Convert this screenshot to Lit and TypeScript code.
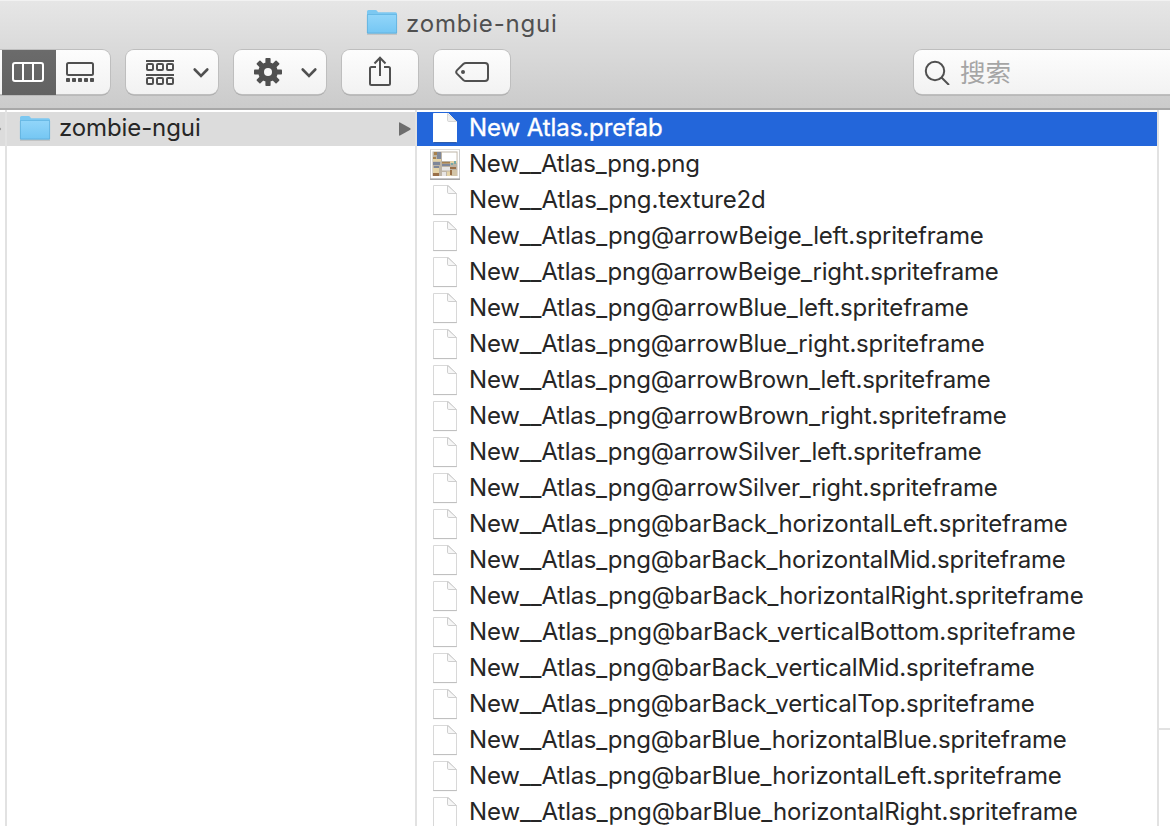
import { LitElement, html, css, svg } from "lit";
import { customElement } from "lit/decorators.js";

/** Each file name with the width its label takes in the column. */
const FILES: [string, number][] = [
  ["New Atlas.prefab", 192],
  ["New__Atlas_png.png", 229],
  ["New__Atlas_png.texture2d", 295],
  ["New__Atlas_png@arrowBeige_left.spriteframe", 513],
  ["New__Atlas_png@arrowBeige_right.spriteframe", 528],
  ["New__Atlas_png@arrowBlue_left.spriteframe", 498],
  ["New__Atlas_png@arrowBlue_right.spriteframe", 514],
  ["New__Atlas_png@arrowBrown_left.spriteframe", 520],
  ["New__Atlas_png@arrowBrown_right.spriteframe", 536],
  ["New__Atlas_png@arrowSilver_left.spriteframe", 511],
  ["New__Atlas_png@arrowSilver_right.spriteframe", 527],
  ["New__Atlas_png@barBack_horizontalLeft.spriteframe", 597],
  ["New__Atlas_png@barBack_horizontalMid.spriteframe", 595],
  ["New__Atlas_png@barBack_horizontalRight.spriteframe", 613],
  ["New__Atlas_png@barBack_verticalBottom.spriteframe", 605],
  ["New__Atlas_png@barBack_verticalMid.spriteframe", 564],
  ["New__Atlas_png@barBack_verticalTop.spriteframe", 564],
  ["New__Atlas_png@barBlue_horizontalBlue.spriteframe", 596],
  ["New__Atlas_png@barBlue_horizontalLeft.spriteframe", 591],
  ["New__Atlas_png@barBlue_horizontalRight.spriteframe", 607],
];

const measure = document.createElement("canvas").getContext("2d")!;
const spacing = (text: string, width: number) => {
  measure.font = '24px Inter, "Liberation Sans", sans-serif';
  return ((width + 1.6 - measure.measureText(text).width) / text.length).toFixed(3);
};

const folder = html`<svg class="folder" width="32" height="28" viewBox="0 0 32 28">
  <defs><linearGradient id="f" x1="0" y1="0" x2="0" y2="1"><stop offset="0" stop-color="#91d5f9"/><stop offset="1" stop-color="#74c6f3"/></linearGradient></defs>
  <path d="M1 26H31" stroke="#000" stroke-opacity=".22"/>
  <path d="M1 3.5Q1 2 2.5 2H9.5Q10.5 2 11.2 3L12 4.2H29.5Q31 4.2 31 5.7V25H1Z" fill="#7cc8f1"/>
  <path d="M1 7H31V24.5Q31 25.5 30 25.5H2Q1 25.5 1 24.5Z" fill="url(#f)"/>
  <path d="M1 6.5H31" stroke="#65b6e3" stroke-width=".8"/>
  <path d="M1.4 7V25H30.6V7" fill="none" stroke="#5faedb" stroke-width=".8"/>
</svg>`;

const doc = html`<svg class="doc" width="30" height="34" viewBox="0 0 30 34">
  <path class="page" d="M3.5 1.5H18.5L26.5 9.5V30.5H3.5Z"/>
  <path class="fold" d="M17.5 1.5V8.2Q17.5 9.5 18.8 9.5H26.5Z"/>
  <path class="foot" d="M3.2 30.6H26.8"/>
</svg>`;

const picture = html`<svg class="doc" width="30" height="34" viewBox="0 0 30 34">
  <rect x=".2" y=".9" width="29.6" height="30.7" rx=".8" fill="#c0c0c0"/>
  <path d="M0 31.2H30" stroke="#8c8c8c"/>
  <rect x="1" y="1.6" width="28" height="28.7" fill="#fff"/>
  <rect x="2.5" y="3.5" width="25" height="24.5" fill="#bdb4a5"/>
  <rect x="12" y="4.5" width="14.6" height="8.5" fill="#fff"/>
  <path d="M4 4H7V7H4ZM3 9H6V11H3ZM12 14H20V15.5H12Z" fill="#a8814e"/>
  <path d="M7 4H11V11H7ZM12 16H20V18H12ZM3 14H10V17H3ZM4 18H9V20H4Z" fill="#7f8799"/>
  <path d="M3 11H11V13.5H3ZM20 13H27V15H20ZM3 20H9V25H3ZM17 23.5H21V28H17Z" fill="#e5d4a8"/>
  <path d="M12 19H20V22.5H12ZM12 24H16V28H12Z" fill="#e8e6e4"/>
  <path d="M3 25H9V28H3ZM20 19H26V21H20ZM20 22H22V27H20Z" fill="#9a7048"/>
  <path d="M21 15H23V17H21ZM24 13H26V16H24Z" fill="#79aaa7"/>
  <path d="M22 22H27V28H22Z" fill="#d3c5a8"/>
</svg>`;

const chevron = html`<svg class="chev" width="18" height="12" viewBox="0 0 18 12"><path d="M2.7 2.5L9 8.8L15.3 2.5" fill="none" stroke="#505050" stroke-width="2.6" stroke-linecap="round" stroke-linejoin="miter"/></svg>`;

@customElement("app-root")
export class AppRoot extends LitElement {
  static styles = css`
    :host { display: flex; flex-direction: column; width: 1170px; height: 826px; overflow: hidden; background: #fff; color: #262626; font: 24px/34px Inter, "Liberation Sans", "Noto Sans CJK SC", sans-serif; }
    * { box-sizing: border-box; }
    svg { display: block; flex: none; }
    .chrome { flex: none; height: 110px; background: linear-gradient(#e6e6e6, #cbcbcb); border-bottom: 2px solid #a8a8a8; border-top: 1px solid #f2f2f2; }
    .title { display: flex; height: 49px; padding: 6px 0 0 366px; color: #505050; }
    .title .folder { margin: 1px 8px 0 0; }
    .tools { display: flex; height: 44px; gap: 16px; }
    .btn { display: flex; align-items: center; justify-content: center; height: 44px; border-radius: 8px; background: linear-gradient(#fdfdfd, #f2f2f2); box-shadow: 0 0 0 1px #bebebe, 0 1.5px 0 0 #a4a4a4; flex: none; }
    .views { width: 110px; border-radius: 0 8px 8px 0; justify-content: flex-start; }
    .active { display: flex; align-items: center; width: 54px; height: 45px; margin: 0 10px 0 2px; padding-left: 10px; background: linear-gradient(#6b6b6b, #626262); }
    .menu { width: 92px; justify-content: flex-start; padding-left: 20px; gap: 17.5px; }
    .chev { margin-top: 1px; }
    .single { width: 76px; }
    .search { width: 270px; margin-left: 388px; justify-content: flex-start; padding-left: 10px; gap: 10px; color: #a5a5a5; font: 25.5px/42px "Noto Sans CJK SC", sans-serif; }
    .search .label { height: 44px; }
    .browser { display: flex; flex: 1; min-height: 0; }
    .edge { width: 7px; padding-top: 2px; border-right: 2px solid #e2e2e2; flex: none; }
    .tip { display: flex; align-items: center; height: 34px; background: #dcdcdc; }
    .parent { width: 410px; padding-top: 2px; border-right: 2px solid #e2e2e2; flex: none; }
    .dir { display: flex; align-items: center; height: 34px; background: #dcdcdc; padding: 0 4px 0 12px; }
    .dir .folder { margin-top: -2px; }
    .dir .name { flex: 1; padding-left: 8px; line-height: 32px; align-self: flex-start; }
    .files { width: 742px; padding-top: 2px; border-right: 2px solid #e2e2e2; flex: none; display: flex; flex-direction: column; gap: 2px; overflow: hidden; }
    .row { display: flex; height: 34px; flex: none; padding-left: 13px; white-space: pre; line-height: 32px; }
    .row .name { padding-left: 9px; }
    .row.sel { background: #2366da; color: #fff; }
    .row.sel .name { -webkit-text-stroke: .35px #fff; }
    .page { fill: #fff; stroke: #d8d8d8; }
    .fold { fill: #f7f7f7; stroke: #cfcfcf; stroke-linejoin: round; }
    .foot { stroke: #bdbdbd; }
    .sel .page { stroke: #fff; }
    .sel .fold { fill: #eee; stroke: #d6d6d6; }
    .sel .foot { stroke: #1a4da5; }
    .preview { flex: 1; display: flex; flex-direction: column; }
    .thumb { height: 620px; border-bottom: 2px solid #e2e2e2; }
  `;

  render() {
    const squares = [64, 78].map((y) => [0, 10, 20].map((x) => svg`<rect x=${x + 1} y=${y - 58} width="6" height="6" rx="1"/>`));
    return html`
      <div class="chrome">
        <div class="title">${folder}<span style="letter-spacing:${spacing("zombie-ngui", 150)}px">zombie-ngui</span></div>
        <div class="tools">
          <div class="btn views">
            <div class="active"><svg width="32" height="20" viewBox="0 0 32 20"><path d="M3 1H29Q31 1 31 3V17Q31 19 29 19H3Q1 19 1 17V3Q1 1 3 1ZM11 1V19M21 1V19" fill="none" stroke="#fff" stroke-width="2"/></svg></div>
            <svg width="28" height="20" viewBox="0 0 28 20"><rect x="1" y="1" width="26" height="12" rx="1.5" fill="none" stroke="#505050" stroke-width="2"/>${[0, 6, 12, 18, 24].map((x) => svg`<rect x=${x} y="16" width="4" height="4" rx=".8" fill="#505050"/>`)}</svg>
          </div>
          <div class="btn menu">
            <svg width="28" height="28" viewBox="0 0 28 28" fill="none" stroke="#505050" stroke-width="2"><path d="M0 3H28M0 17H28"/>${squares}</svg>${chevron}
          </div>
          <div class="btn menu">
            <svg width="28" height="28" viewBox="-14 -14 28 28"><g fill="#505050">${[0, 45, 90, 135].map((a) => svg`<rect x="-2.6" y="-14" width="5.2" height="28" rx=".8" transform="rotate(${a})"/>`)}</g><circle r="6.9" fill="none" stroke="#505050" stroke-width="5.8"/><circle r="4" fill="#f8f8f8"/></svg>${chevron}
          </div>
          <div class="btn single">
            <svg width="24" height="32" viewBox="0 0 24 32" fill="none" stroke="#505050" stroke-width="2"><path d="M8 11H3.5Q2 11 2 12.5V27.5Q2 29 3.5 29H20.5Q22 29 22 27.5V12.5Q22 11 20.5 11H16M12 20V2M6.5 7.5L12 1.8L17.5 7.5"/></svg>
          </div>
          <div class="btn single">
            <svg width="34" height="20" viewBox="0 0 34 20"><path d="M11 1H30Q33 1 33 4V16Q33 19 30 19H11Q9.5 19 8.3 17.9L1.9 11.6Q.5 10 1.9 8.4L8.3 2.1Q9.5 1 11 1Z" fill="none" stroke="#505050" stroke-width="2"/><circle cx="8" cy="10" r="2" fill="#505050"/></svg>
          </div>
          <div class="btn search">
            <svg width="26" height="26" viewBox="0 0 26 26" fill="none" stroke="#505050" stroke-width="2"><circle cx="11" cy="12" r="9.2"/><path d="M17.5 18.5L25 26"/></svg><span class="label">搜索</span>
          </div>
        </div>
      </div>
      <div class="browser">
        <div class="edge"><div class="tip"><svg width="2" height="6"><path d="M0 1.5L1.2 3L0 4.5Z" fill="#8a8a8a"/></svg></div></div>
        <div class="parent"><div class="dir">${folder}<span class="name" style="letter-spacing:${spacing("zombie-ngui", 140)}px">zombie-ngui</span>
          <svg width="12" height="14"><path d="M0 1Q0 0 1 .4L11.3 6.2Q12 7 11.3 7.8L1 13.6Q0 14 0 13Z" fill="#6d6d6d"/></svg></div></div>
        <div class="files">
          ${FILES.map(([name, width], i) => html`<div class="row ${i === 0 ? "sel" : ""}">${i === 1 ? picture : doc}<span class="name" style="letter-spacing:${spacing(name, width)}px">${name}</span></div>`)}
        </div>
        <div class="preview"><div class="thumb"></div></div>
      </div>`;
  }
}
